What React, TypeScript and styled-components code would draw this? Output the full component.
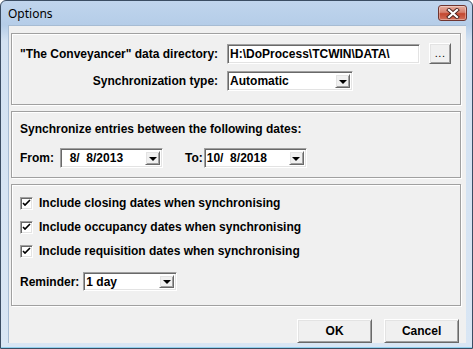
import React from 'react'
import styled, { createGlobalStyle } from 'styled-components'

const GlobalStyle = createGlobalStyle`
  html, body {
    margin: 0;
    padding: 0;
    background: #ffffff;
  }
  body {
    font-family: 'Liberation Sans', Arial, sans-serif;
  }
`

const Window = styled.div`
  width: 473px;
  height: 349px;
  box-sizing: border-box;
  border: 1px solid #3b4d63;
  border-radius: 6px 6px 0 0;
  background: linear-gradient(to bottom, #c0d5ed 0px, #b5cde8 24px, #d3e2f2 40px, #d9e6f4 100%);
  display: flex;
  flex-direction: column;
  overflow: hidden;
`

const TitleBar = styled.div`
  height: 24px;
  flex: none;
  display: flex;
  align-items: center;
  justify-content: space-between;
  padding: 0 5px 0 7px;
`

const Title = styled.span`
  font-family: 'Noto Sans', 'Open Sans', sans-serif;
  font-size: 12px;
  color: #000;
  margin-top: 1px;
`

const CloseButton = styled.div`
  width: 29px;
  height: 16px;
  box-sizing: border-box;
  border: 1px solid #6f3530;
  border-radius: 3px;
  background: linear-gradient(to bottom, #e6ae9f 0%, #d6806e 45%, #c3472f 55%, #d2705b 100%);
  box-shadow: inset 0 0 0 1px rgba(255, 255, 255, 0.35);
  display: flex;
  align-items: center;
  justify-content: center;
`

const FrameBody = styled.div`
  flex: 1;
  display: flex;
  padding: 0 8px 4px 7px;
  border-bottom: 1px solid #92d0ee;
`

const Client = styled.div`
  flex: 1;
  background: #f0f0f0;
  border: 1px solid #a7bcd3;
  border-width: 1px 0 0 1px;
  display: flex;
  flex-direction: column;
  padding: 7px 5px 0 2px;
`

const GroupBox = styled.div<{ $h: number; $pt: number }>`
  height: ${p => p.$h}px;
  box-sizing: border-box;
  border: 1px solid #a0a0a0;
  box-shadow: 1px 1px 0 #ffffff, inset 1px 1px 0 #ffffff;
  padding: ${p => p.$pt}px 0 0 8px;
  margin-bottom: 6px;
  display: flex;
  flex-direction: column;
`

const Label = styled.span`
  font-size: 12px;
  font-weight: bold;
  color: #000;
  line-height: 14px;
  white-space: pre;
`

const DirGrid = styled.div`
  display: grid;
  grid-template-columns: auto auto 1fr;
  column-gap: 9px;
  row-gap: 7px;
  align-items: center;
  justify-items: start;
  ${Label} {
    justify-self: end;
  }
`

const sunken = `
  box-sizing: border-box;
  border-style: solid;
  border-width: 1px;
  border-color: #a0a0a0 #ffffff #ffffff #a0a0a0;
  box-shadow: inset 1px 1px 0 #696969, inset -1px -1px 0 #e3e3e3;
  background: #ffffff;
`

const raised = `
  box-sizing: border-box;
  border-style: solid;
  border-width: 1px;
  border-color: #ffffff #696969 #696969 #ffffff;
  box-shadow: inset 1px 1px 0 #e3e3e3, inset -1px -1px 0 #a0a0a0;
  background: #f0f0f0;
`

const TextField = styled.div<{ $w: number }>`
  ${sunken}
  width: ${p => p.$w}px;
  height: 20px;
  display: flex;
  align-items: center;
  padding-left: 2px;
  font-size: 12px;
  font-weight: bold;
  white-space: pre;
`

const Combo = styled.div<{ $w: number; $h?: number }>`
  ${sunken}
  width: ${p => p.$w}px;
  height: ${p => p.$h ?? 20}px;
  display: flex;
  align-items: center;
  padding: 2px;
  font-size: 12px;
  font-weight: bold;
  white-space: pre;
`

const ComboText = styled.span`
  flex: 1;
`

const ArrowButton = styled.div`
  ${raised}
  width: 15px;
  align-self: stretch;
  display: flex;
  align-items: center;
  justify-content: center;
`

const Arrow = styled.span`
  width: 0;
  height: 0;
  border-left: 4px solid transparent;
  border-right: 4px solid transparent;
  border-top: 4px solid #000;
  margin-top: 1px;
`

const SmallButton = styled.div`
  ${raised}
  width: 22px;
  height: 21px;
  display: flex;
  align-items: flex-end;
  justify-content: center;
  padding-bottom: 4px;
  font-size: 11px;
  letter-spacing: 0.5px;
`

const DirRow = styled.div`
  display: flex;
  align-items: center;
  gap: 9px;
`

const DateRow = styled.div`
  display: flex;
  align-items: center;
  margin-top: 12px;
`

const Gap = styled.span<{ $w: number }>`
  width: ${p => p.$w}px;
  flex: none;
`

const CheckRow = styled.label`
  height: 24px;
  display: flex;
  align-items: center;
  gap: 6px;
`

const CheckBox = styled.span`
  ${sunken}
  width: 13px;
  height: 13px;
  display: flex;
  align-items: center;
  justify-content: center;
`

const ReminderRow = styled.div`
  display: flex;
  align-items: center;
  gap: 4px;
  margin-top: 9px;
`

const ButtonRow = styled.div`
  display: flex;
  justify-content: flex-end;
  gap: 12px;
  margin-top: 7px;
  padding-right: 2px;
`

const DialogButton = styled.div`
  ${raised}
  width: 75px;
  height: 24px;
  display: flex;
  align-items: center;
  justify-content: center;
  font-size: 12px;
  font-weight: bold;
`

const FS = '\u2007'

const Check = () => (
  <CheckBox>
    <svg width="9" height="9" viewBox="0 0 9 9">
      <path d="M1 4 L3 6 L8 1" stroke="#000" strokeWidth="1.6" fill="none" />
    </svg>
  </CheckBox>
)

const DropDown = ({ text, w, h }: { text: string; w: number; h?: number }) => (
  <Combo $w={w} $h={h}>
    <ComboText>{text}</ComboText>
    <ArrowButton>
      <Arrow />
    </ArrowButton>
  </Combo>
)

const checks = [
  'Include closing dates when synchronising',
  'Include occupancy dates when synchronising',
  'Include requisition dates when synchronising',
]

export default function App() {
  return (
    <>
      <GlobalStyle />
      <Window>
        <TitleBar>
          <Title>Options</Title>
          <CloseButton>
            <svg width="14" height="11" viewBox="0 0 14 11">
              <path d="M3 2 L11 9 M11 2 L3 9" stroke="#4a2420" strokeWidth="4" strokeLinecap="square" />
              <path d="M3 2 L11 9 M11 2 L3 9" stroke="#ffffff" strokeWidth="2.2" strokeLinecap="square" />
            </svg>
          </CloseButton>
        </TitleBar>
        <FrameBody>
          <Client>
            <GroupBox $h={72} $pt={9}>
              <DirGrid>
                <Label>"The Conveyancer" data directory:</Label>
                <DirRow>
                  <TextField $w={193}>H:\DoProcess\TCWIN\DATA\</TextField>
                  <SmallButton>...</SmallButton>
                </DirRow>
                <span />
                <Label>Synchronization type:</Label>
                <DropDown text="Automatic" w={126} />
                <span />
              </DirGrid>
            </GroupBox>
            <GroupBox $h={67} $pt={10}>
              <Label>Synchronize entries between the following dates:</Label>
              <DateRow>
                <Label>From:</Label>
                <Gap $w={6} />
                <DropDown text={`${FS}8/${FS}8/2013`} w={103} />
                <Gap $w={22} />
                <Label>To:</Label>
                <Gap $w={1} />
                <DropDown text={`10/${FS}8/2018`} w={103} />
              </DateRow>
            </GroupBox>
            <GroupBox $h={122} $pt={6}>
              {checks.map(c => (
                <CheckRow key={c}>
                  <Check />
                  <Label>{c}</Label>
                </CheckRow>
              ))}
              <ReminderRow>
                <Label>Reminder:</Label>
                <DropDown text="1 day" w={94} h={19} />
              </ReminderRow>
            </GroupBox>
            <ButtonRow>
              <DialogButton>OK</DialogButton>
              <DialogButton>Cancel</DialogButton>
            </ButtonRow>
          </Client>
        </FrameBody>
      </Window>
    </>
  )
}
